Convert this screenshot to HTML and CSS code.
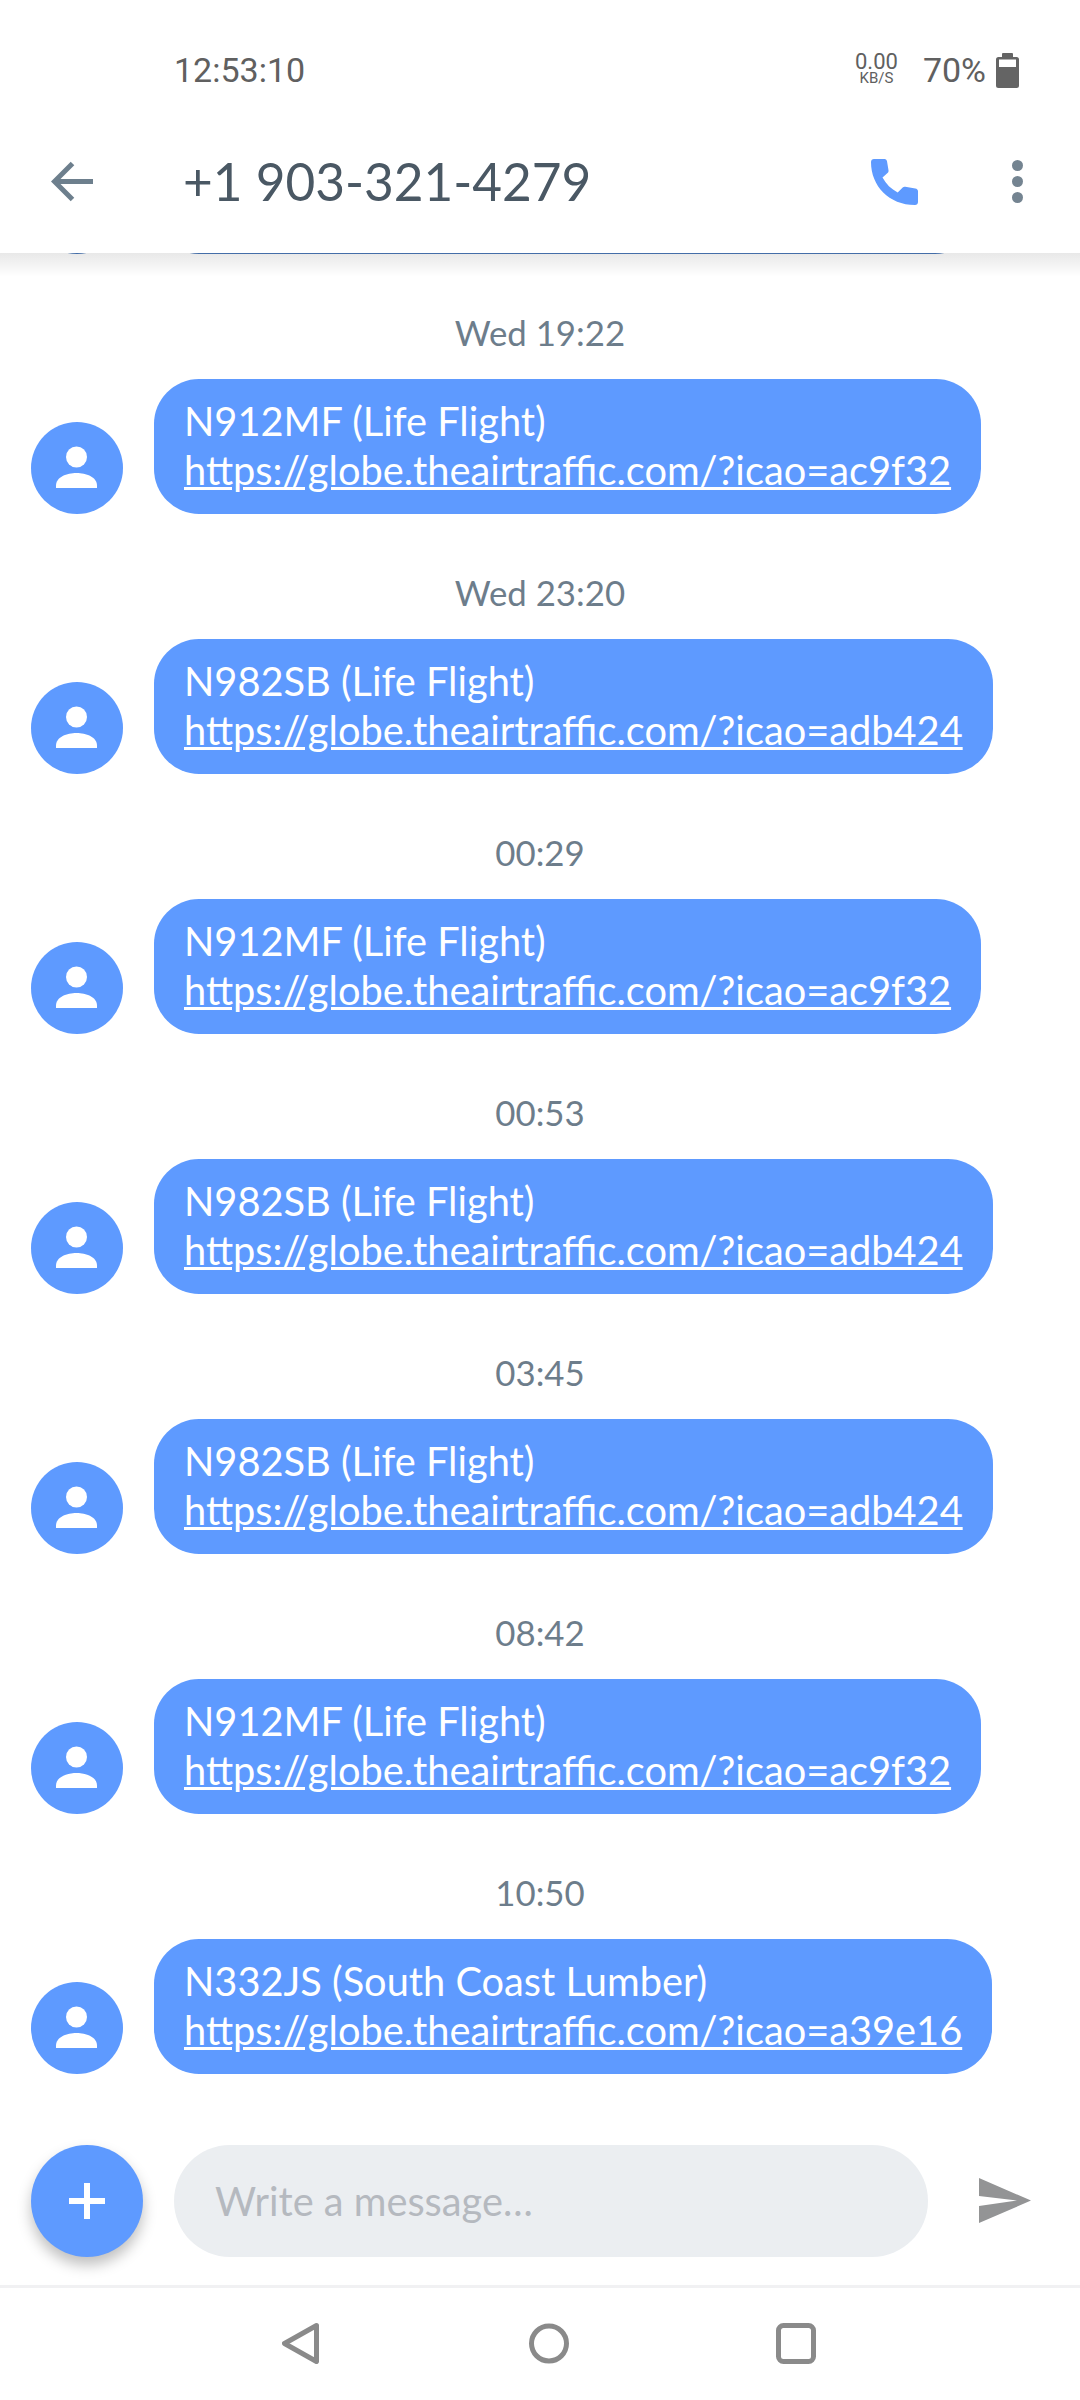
FILE: index.html
```html
<!DOCTYPE html>
<html>
<head>
  <link rel="stylesheet" href="styles.css">
</head>
<body>
  <div class="app">
    <div class="top">
      <div class="status-bar">
        <span class="clock">12:53:10</span>
        <div class="status-right">
          <div class="net"><span class="net-num">0.00</span><span class="net-unit">KB/S</span></div>
          <span class="battery-pct">70%</span>
          <svg class="battery" viewBox="0 0 23 35">
            <path fill-rule="evenodd" fill="#646464" d="M7 0h9a1 1 0 0 1 1 1v3h3.500a2.500 2.500 0 0 1 2.500 2.500V32.500a2.500 2.500 0 0 1-2.500 2.500H2.500A2.500 2.500 0 0 1 0 32.500V6.500A2.500 2.500 0 0 1 2.500 4H6V1a1 1 0 0 1 1-1zM3 6.500v7.500h17V6.500z"/>
          </svg>
        </div>
      </div>
      <div class="app-bar">
        <svg class="back" viewBox="0 0 42 42">
          <path d="M42 20.500H5M21.500 2.500L3.500 20.500L21.500 38.500" fill="none" stroke="#6d7f8d" stroke-width="5"/>
        </svg>
        <div class="contact">+1 903-321-4279</div>
        <svg class="call" viewBox="0 0 47 46">
          <path fill="#5e9aff" d="M3 0h10.500c1.500 0 2.300 1 2.500 2.300l1.500 9c.2 1 0 1.800-.7 2.500l-5.300 4.700c3.500 6.500 8.600 11.500 15.200 15l5-5c.7-.7 1.600-.9 2.600-.7l10 1.700c1.600.3 2.700 1.200 2.700 2.700V43c0 1.700-1.300 3-3 3C18 46 0 27 0 3c0-1.700 1.300-3 3-3z"/>
        </svg>
        <div class="more"><i></i><i></i><i></i></div>
      </div>
    </div>

    <div class="thread">
      <!-- bottom edge of the message scrolled under the header -->
      <div class="peek">
        <div class="avatar"></div>
        <div class="bubble bubble-empty"></div>
      </div>
      <div class="msg">
        <div class="time">Wed 19:22</div>
        <div class="row">
          <div class="avatar">
            <svg viewBox="0 0 92 92"><circle cx="45.500" cy="35" r="10.500"/><path d="M25 66v-2.500C25 55 36 51 45.500 51S66 55 66 63.500V66z"/></svg>
          </div>
          <div class="bubble">N912MF (Life Flight)<br><a>https://globe.theairtraffic.com/?icao=ac9f32</a></div>
        </div>
      </div>
      <div class="msg">
        <div class="time">Wed 23:20</div>
        <div class="row">
          <div class="avatar">
            <svg viewBox="0 0 92 92"><circle cx="45.500" cy="35" r="10.500"/><path d="M25 66v-2.500C25 55 36 51 45.500 51S66 55 66 63.500V66z"/></svg>
          </div>
          <div class="bubble">N982SB (Life Flight)<br><a>https://globe.theairtraffic.com/?icao=adb424</a></div>
        </div>
      </div>
      <div class="msg">
        <div class="time">00:29</div>
        <div class="row">
          <div class="avatar">
            <svg viewBox="0 0 92 92"><circle cx="45.500" cy="35" r="10.500"/><path d="M25 66v-2.500C25 55 36 51 45.500 51S66 55 66 63.500V66z"/></svg>
          </div>
          <div class="bubble">N912MF (Life Flight)<br><a>https://globe.theairtraffic.com/?icao=ac9f32</a></div>
        </div>
      </div>
      <div class="msg">
        <div class="time">00:53</div>
        <div class="row">
          <div class="avatar">
            <svg viewBox="0 0 92 92"><circle cx="45.500" cy="35" r="10.500"/><path d="M25 66v-2.500C25 55 36 51 45.500 51S66 55 66 63.500V66z"/></svg>
          </div>
          <div class="bubble">N982SB (Life Flight)<br><a>https://globe.theairtraffic.com/?icao=adb424</a></div>
        </div>
      </div>
      <div class="msg">
        <div class="time">03:45</div>
        <div class="row">
          <div class="avatar">
            <svg viewBox="0 0 92 92"><circle cx="45.500" cy="35" r="10.500"/><path d="M25 66v-2.500C25 55 36 51 45.500 51S66 55 66 63.500V66z"/></svg>
          </div>
          <div class="bubble">N982SB (Life Flight)<br><a>https://globe.theairtraffic.com/?icao=adb424</a></div>
        </div>
      </div>
      <div class="msg">
        <div class="time">08:42</div>
        <div class="row">
          <div class="avatar">
            <svg viewBox="0 0 92 92"><circle cx="45.500" cy="35" r="10.500"/><path d="M25 66v-2.500C25 55 36 51 45.500 51S66 55 66 63.500V66z"/></svg>
          </div>
          <div class="bubble">N912MF (Life Flight)<br><a>https://globe.theairtraffic.com/?icao=ac9f32</a></div>
        </div>
      </div>
      <div class="msg">
        <div class="time">10:50</div>
        <div class="row">
          <div class="avatar">
            <svg viewBox="0 0 92 92"><circle cx="45.500" cy="35" r="10.500"/><path d="M25 66v-2.500C25 55 36 51 45.500 51S66 55 66 63.500V66z"/></svg>
          </div>
          <div class="bubble">N332JS (South Coast Lumber)<br><a>https://globe.theairtraffic.com/?icao=a39e16</a></div>
        </div>
      </div>
    </div>

    <div class="composer">
      <div class="fab">
        <svg viewBox="0 0 36 36"><path d="M18 0v36M0 18h36" fill="none" stroke="#fff" stroke-width="6"/></svg>
      </div>
      <div class="input">Write a message…</div>
      <svg class="send" viewBox="0 0 52 45">
        <path fill="#939495" d="M0 0L52 22.500L0 45V28L38 22.500L0 18z"/>
      </svg>
    </div>

    <div class="nav-bar">
      <svg class="nav-icon nav-back" viewBox="0 0 37 41">
        <path d="M34.500 2.500L2.500 20.500L34.500 38.500z" fill="none" stroke="#8a8a8a" stroke-width="5" stroke-linejoin="round"/>
      </svg>
      <svg class="nav-icon nav-home" viewBox="0 0 40 41">
        <circle cx="20" cy="20.500" r="17.500" fill="none" stroke="#8a8a8a" stroke-width="5"/>
      </svg>
      <svg class="nav-icon nav-recent" viewBox="0 0 40 41">
        <rect x="2.500" y="2.500" width="35" height="36" rx="5" fill="none" stroke="#8a8a8a" stroke-width="5"/>
      </svg>
    </div>
  </div>
</body>
</html>
```
FILE: styles.css
```css
* {
  margin: 0;
  padding: 0;
  box-sizing: border-box;
}

body {
  width: 1080px;
  height: 2400px;
  background: #fff;
  font-family: Lato, sans-serif;
  overflow: hidden;
}

.app {
  display: flex;
  flex-direction: column;
  height: 2400px;
}

/* status bar + contact header */
.top {
  position: relative;
  z-index: 2;
  flex: none;
  background: #fff;
}

.top::after {
  content: '';
  position: absolute;
  left: 0;
  right: 0;
  top: 100%;
  height: 24px;
  background: linear-gradient(rgba(0, 0, 0, 0.09), rgba(0, 0, 0, 0));
}

.status-bar {
  height: 110px;
  display: flex;
  align-items: center;
  justify-content: space-between;
  padding: 30px 61px 0 174px;
  font-family: Roboto, sans-serif;
  color: #606060;
}

.clock {
  font-size: 34px;
}

.status-right {
  display: flex;
  align-items: center;
}

.net {
  display: flex;
  flex-direction: column;
  align-items: center;
  margin: 0 25px 2px 0;
}

.net-num {
  font-size: 22px;
  line-height: 18px;
}

.net-unit {
  font-size: 15px;
  line-height: 14px;
}

.battery-pct {
  font-size: 34px;
  margin-right: 10px;
}

.battery {
  width: 23px;
  height: 35px;
}

.app-bar {
  height: 143px;
  display: flex;
  align-items: center;
  padding-left: 51px;
}

.back {
  width: 42px;
  height: 42px;
  flex: none;
}

.contact {
  flex: 1;
  margin: 0 0 2px 90px;
  font-size: 51.3px;
  color: #4a5864;
}

.call {
  width: 47px;
  height: 46px;
  flex: none;
}

.more {
  display: flex;
  flex-direction: column;
  gap: 5px;
  margin: 0 57px 0 94px;
}

.more i {
  display: block;
  width: 11px;
  height: 11px;
  border-radius: 50%;
  background: #748491;
}

/* messages */
.thread {
  flex: 1;
  overflow: hidden;
}

.peek {
  height: 1px;
  display: flex;
  align-items: flex-end;
  padding-left: 31px;
  gap: 31px;
  overflow: hidden;
}

.bubble-empty {
  width: 826px;
  height: 135px;
  flex: none;
}

.msg {
  padding-top: 54px;
}

.time {
  height: 50px;
  line-height: 50px;
  margin-bottom: 21px;
  text-align: center;
  font-size: 34.8px;
  color: #6d7d8b;
}

.row {
  display: flex;
  align-items: flex-end;
  padding-left: 31px;
  gap: 31px;
}

.avatar {
  width: 92px;
  height: 92px;
  flex: none;
  border-radius: 50%;
  background: #5e9aff;
}

.avatar svg {
  display: block;
  fill: #fff;
}

.bubble {
  padding: 17px 30px 20px;
  border-radius: 45px;
  background: #5e9aff;
  color: #fff;
  font-size: 39.75px;
  line-height: 49px;
  white-space: nowrap;
}

.bubble a {
  text-decoration: underline;
}

/* dimmed by the header shadow */
.peek .avatar,
.peek .bubble {
  background: #4a78b8;
}

/* input row */
.composer {
  flex: none;
  height: 160px;
  display: flex;
  align-items: flex-start;
  padding: 20px 0 0 31px;
}

.fab {
  width: 112px;
  height: 112px;
  flex: none;
  display: flex;
  align-items: center;
  justify-content: center;
  border-radius: 50%;
  background: #5e9aff;
  box-shadow: 0 8px 14px rgba(0, 0, 0, 0.25);
}

.fab svg {
  width: 36px;
  height: 36px;
}

.input {
  width: 754px;
  height: 112px;
  margin-left: 31px;
  padding-left: 41px;
  border-radius: 56px;
  background: #ebeef1;
  color: #b5b9bf;
  font-size: 39.75px;
  line-height: 112px;
}

.send {
  width: 52px;
  height: 45px;
  margin: 33px 0 0 51px;
}

.nav-bar {
  flex: none;
  height: 115px;
  border-top: 3px solid #f1f1f3;
  display: flex;
  padding: 35px 0 0 282px;
}

.nav-icon {
  height: 41px;
  flex: none;
}

.nav-back {
  width: 37px;
}

.nav-home {
  width: 40px;
  margin-left: 210px;
}

.nav-recent {
  width: 40px;
  margin-left: 207px;
}
```
